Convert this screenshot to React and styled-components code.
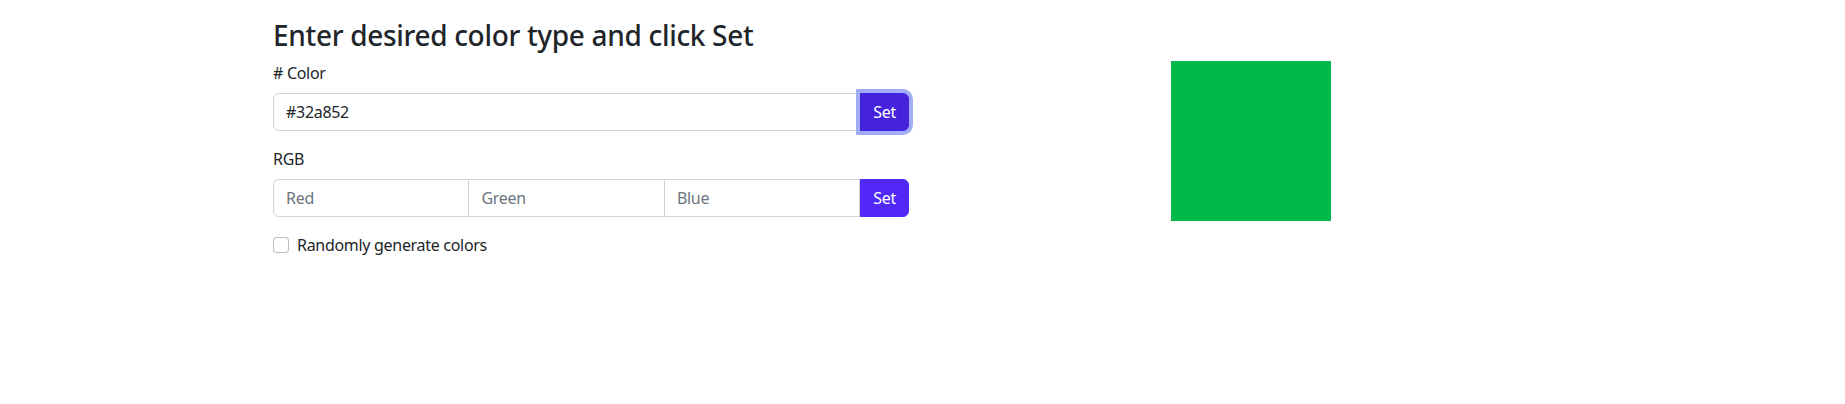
import React from "react";
import styled, { createGlobalStyle } from "styled-components";

const GlobalStyle = createGlobalStyle`
  body {
    margin: 0;
    background: #fff;
    color: #212529;
    font-family: "Noto Sans", "Open Sans", sans-serif;
    font-size: 16px;
    line-height: 1.5;
    letter-spacing: -0.3px;
  }
  * {
    box-sizing: border-box;
  }
`;

const Container = styled.div`
  width: 1323px;
  margin: 0 auto;
  padding: 19px 3px 0 0;
`;

const Row = styled.div`
  display: flex;
`;

const Col = styled.div`
  flex: 0 0 50%;
  min-width: 0;
  padding: 0 12px;
  display: flex;
  flex-direction: column;
  align-items: ${props => (props.center ? "center" : "stretch")};
`;

const Title = styled.h3`
  margin: 0 0 8px;
  font-size: 28px;
  font-weight: 500;
  line-height: 1.2;
  letter-spacing: -0.32px;
`;

const Label = styled.label`
  display: block;
  margin-bottom: 8px;
`;

const InputGroup = styled.div`
  display: flex;
  margin-bottom: 16px;
`;

const Input = styled.input`
  flex: 1 1 0;
  min-width: 0;
  height: 38px;
  padding: 6px 12px;
  font: inherit;
  letter-spacing: inherit;
  color: #212529;
  border: 1px solid #ced4da;
  border-radius: 0;
  margin-left: -1px;
  outline: none;

  &:first-child {
    margin-left: 0;
    border-radius: 6px 0 0 6px;
  }

  &::placeholder {
    color: #6c757d;
  }
`;

const Button = styled.button`
  height: 38px;
  padding: 6px 12px;
  font: inherit;
  letter-spacing: inherit;
  color: #fff;
  background: ${props => (props.focused ? "#4522dc" : "#5128f7")};
  border: 1px solid ${props => (props.focused ? "#4522dc" : "#5128f7")};
  border-radius: 0 6px 6px 0;
  box-shadow: ${props => (props.focused ? "0 0 0 4px #a2acf7" : "none")};
  position: relative;
  z-index: ${props => (props.focused ? 2 : 0)};
`;

const Check = styled.div`
  display: flex;
  align-items: flex-start;
  gap: 8px;
  min-height: 24px;
`;

const CheckBox = styled.span`
  width: 16px;
  height: 16px;
  margin-top: 4px;
  border: 1px solid rgba(0, 0, 0, 0.25);
  border-radius: 4px;
  background: #fff;
  flex-shrink: 0;
`;

const Swatch = styled.div`
  width: 160px;
  height: 160px;
  margin-top: 42px;
  background: ${props => props.color};
`;

const App = () => (
  <>
    <GlobalStyle />
    <Container>
      <Row>
        <Col>
          <Title>Enter desired color type and click Set</Title>
          <Label># Color</Label>
          <InputGroup>
            <Input defaultValue="#32a852" />
            <Button focused>Set</Button>
          </InputGroup>
          <Label>RGB</Label>
          <InputGroup>
            <Input placeholder="Red" />
            <Input placeholder="Green" />
            <Input placeholder="Blue" />
            <Button>Set</Button>
          </InputGroup>
          <Check>
            <CheckBox />
            <span>Randomly generate colors</span>
          </Check>
        </Col>
        <Col center>
          <Swatch color="#00b74a" />
        </Col>
      </Row>
    </Container>
  </>
);

export default App;
